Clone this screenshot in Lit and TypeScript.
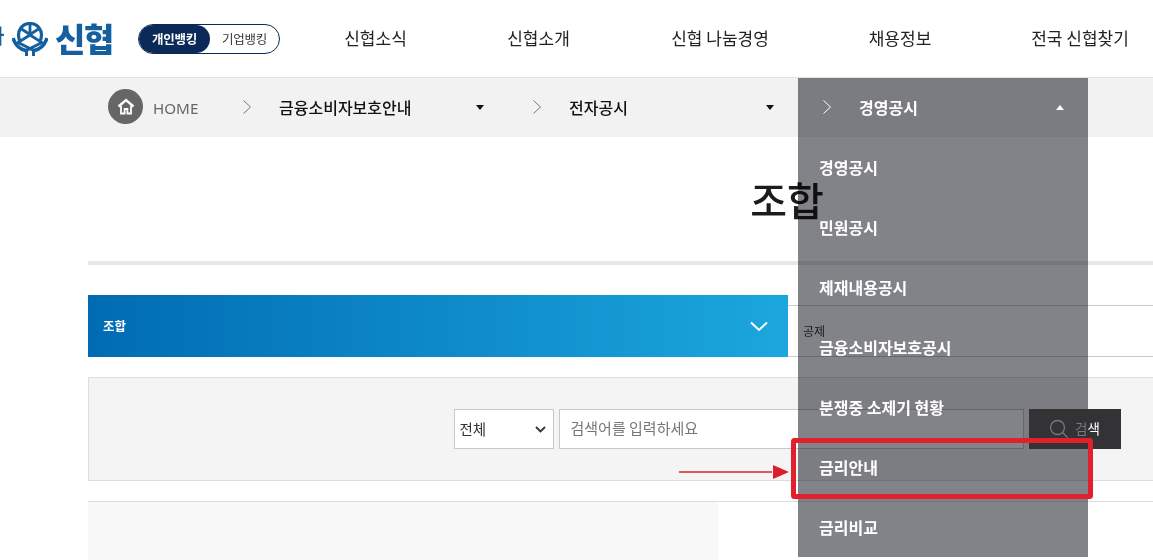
import { LitElement, html, css, svg } from "lit";
import { customElement } from "lit/decorators.js";

const chevron = html`<svg class="chev" width="8" height="14" viewBox="0 0 8 14"><path d="M0.5 0.5l7 6.5-7 6.5" fill="none" stroke="currentColor" stroke-width="1"/></svg>`;

@customElement("app-root")
export class AppRoot extends LitElement {
  static styles = css`
    :host {
      display: block;
      position: relative;
      width: 1153px;
      height: 560px;
      overflow: hidden;
      background: #fff;
      font-family: "Noto Sans CJK KR", "Noto Sans", sans-serif;
      color: #222;
    }
    .header {
      display: flex;
      align-items: center;
      height: 77px;
      border-bottom: 1px solid #e3e3e3;
    }
    .logo {
      display: flex;
      align-items: center;
      width: 138px;
      flex: none;
      color: #14609f;
    }
    .cut {
      font-size: 20px;
      font-weight: 700;
      width: 20px;
      margin-left: -14px;
      margin-right: 6px;
      margin-top: -5px;
      line-height: 1;
      flex: none;
    }
    .emblem { flex: none; margin-right: 7px; }
    .logo b {
      font-size: 33px;
      font-weight: 900;
      line-height: 1;
      letter-spacing: -1.4px;
      white-space: nowrap;
    }
    .toggle {
      display: flex;
      width: 142px;
      height: 30px;
      box-sizing: border-box;
      border: 1px solid #0b2a57;
      border-radius: 15px;
      font-size: 12.5px;
      letter-spacing: -0.3px;
      flex: none;
      overflow: hidden;
    }
    .toggle span {
      display: flex;
      align-items: center;
      justify-content: center;
    }
    .toggle .on {
      width: 71px;
      background: #0b2a57;
      color: #fff;
      font-weight: 700;
      border-radius: 15px;
    }
    .toggle .off { flex: 1; color: #333; }
    .nav { display: flex; margin-left: 14px; margin-top: -3px; flex: none; }
    .nav a {
      display: block;
      text-align: center;
      font-size: 17px;
      color: #222;
      white-space: nowrap;
    }
    .crumbs {
      display: flex;
      height: 59px;
      background: #f2f2f2;
      padding-left: 88px;
    }
    .home {
      display: flex;
      align-items: center;
      width: 130px;
      flex: none;
      padding-left: 20px;
      box-sizing: border-box;
      gap: 10px;
      color: #666;
      font-size: 15.2px;
      font-family: "Noto Sans", sans-serif;
    }
    .home span { margin-top: 0; }
    .home i {
      display: flex;
      align-items: center;
      justify-content: center;
      width: 35px;
      height: 35px;
      border-radius: 50%;
      background: #666;
      margin-top: -2px;
    }
    .item {
      display: flex;
      align-items: center;
      width: 290px;
      height: 59px;
      flex: none;
      padding-left: 25px;
      box-sizing: border-box;
      position: relative;
      font-size: 16px;
      font-weight: 500;
      color: #111;
    }
    .label { margin-top: -2px; }
    .chev { color: #777; flex: none; margin-right: 28px; margin-top: -1px; }
    .tri {
      position: absolute;
      left: 258px;
      top: 27px;
      width: 0;
      height: 0;
      border-left: 4px solid transparent;
      border-right: 4px solid transparent;
      border-top: 5px solid #111;
    }
    .item.open { color: #fff; font-weight: 700; }
    .item.open .label { position: relative; z-index: 3; }
    .item.open .chev { color: #fff; position: relative; z-index: 3; }
    .item.open .tri {
      border-top: 0;
      border-bottom: 5px solid #fff;
      z-index: 3;
    }
    .panel-bg {
      position: absolute;
      left: 0;
      top: 0;
      width: 290px;
      height: 479px;
      background: #828388;
      mix-blend-mode: multiply;
      z-index: 2;
    }
    .menu {
      position: absolute;
      left: 0;
      top: 59px;
      width: 290px;
      margin: 0;
      padding: 0;
      list-style: none;
      z-index: 3;
    }
    .menu li {
      height: 60px;
      display: flex;
      align-items: center;
      padding-left: 21px;
      box-sizing: border-box;
      color: #fff;
      font-size: 16px;
      font-weight: 700;
      white-space: nowrap;
    }
    .page {
      width: 1398px;
      margin-left: 88px;
    }
    h1 {
      margin: 0;
      height: 124px;
      display: flex;
      align-items: center;
      justify-content: center;
      border-bottom: 4px solid #e8e8e8;
      font-size: 40px;
      font-weight: 500;
      color: #1c1c1c;
      line-height: 1;
      box-sizing: content-box;
    }
    .tabs {
      display: flex;
      margin-top: 30px;
      height: 62px;
    }
    .tab-on {
      display: flex;
      align-items: center;
      justify-content: space-between;
      width: 700px;
      padding: 0 20px 0 15px;
      box-sizing: border-box;
      background: linear-gradient(90deg, #006bb3, #1ba7dd);
      color: #fff;
      font-size: 12.5px;
      font-weight: 700;
    }
    .tab-on span { margin-top: -1px; }
    .tab-off {
      flex: 1;
      margin-top: 10px;
      border-top: 1px solid #ccc;
      border-bottom: 1px solid #ccc;
      font-size: 12px;
      color: #333;
      padding-left: 15px;
      display: flex;
      align-items: center;
      padding-bottom: 2px;
      box-sizing: border-box;
    }
    .search {
      display: flex;
      align-items: center;
      justify-content: center;
      gap: 5px;
      height: 104px;
      margin-top: 20px;
      box-sizing: border-box;
      background: #f4f4f4;
      border: 1px solid #ddd;
    }
    .select {
      display: flex;
      align-items: center;
      justify-content: space-between;
      width: 100px;
      height: 40px;
      box-sizing: border-box;
      background: #fff;
      border: 1px solid #c8c8c8;
      padding: 0 7px 0 5px;
      font-size: 14.5px;
      color: #333;
    }
    .select span { margin-top: -2px; }
    .input {
      display: flex;
      align-items: center;
      width: 465px;
      height: 40px;
      box-sizing: border-box;
      background: #fff;
      border: 1px solid #c8c8c8;
      padding-left: 11px;
      padding-bottom: 3px;
      font-size: 15px;
      color: #777;
    }
    .btn {
      display: flex;
      align-items: center;
      justify-content: center;
      gap: 7px;
      width: 92px;
      height: 40px;
      background: #333335;
      position: relative;
      z-index: 4;
      font-size: 13.5px;
      color: #77787c;
    }
    .btn span { margin-top: -2px; margin-left: -1px; }
    .btn em { font-style: normal; color: #fff; }
    .lower {
      display: flex;
      height: 70px;
      margin-top: 20px;
      border-top: 1px solid #ddd;
    }
    .lower div { width: 630px; background: #f8f8f8; }
    .mark { position: absolute; z-index: 5; pointer-events: none; left: 0; top: 0; }
  `;

  render() {
    const navs: [string, number][] = [
      ["신협소식", 163],
      ["신협소개", 163],
      ["신협 나눔경영", 200],
      ["채용정보", 160],
      ["전국 신협찾기", 200],
    ];
    const menu = ["경영공시", "민원공시", "제재내용공시", "금융소비자보호공시", "분쟁중 소제기 현황", "금리안내", "금리비교"];
    return html`
      <header class="header">
        <div class="logo">
          <span class="cut">나</span>
          <svg class="emblem" width="36" height="34" viewBox="0 0 36 34">
            ${svg`<g fill="none" stroke="#14609f">
              <path d="M7.5 18.500C4 8 11 1.500 18 1.500S32 8 28.500 18.500" stroke-width="3.200"/>
              <path d="M18 1.500V12.500M18 12.500L9.500 7M18 12.500L26.500 7" stroke-width="2.800"/>
              <path d="M6 20.500L18 13L30 20.500L18 26.500z" stroke-width="2.800"/>
              <path d="M1 16C3 22.500 7 27 13.500 28.500M35 16C33 22.500 29 27 22.500 28.500" stroke-width="3.600"/>
              <path d="M14.500 34V28L18 26.500L21.500 28V34" stroke-width="3"/>
            </g>`}
          </svg>
          <b>신협</b>
        </div>
        <div class="toggle"><span class="on">개인뱅킹</span><span class="off">기업뱅킹</span></div>
        <nav class="nav">
          ${navs.map(([t, w]) => html`<a style="width:${w}px">${t}</a>`)}
        </nav>
      </header>
      <div class="crumbs">
        <div class="home">
          <i>
            <svg width="18" height="17" viewBox="0 0 18 17">
              <path d="M1.500 8.500L9 2l7.500 6.500" fill="none" stroke="#fff" stroke-width="2.400"/>
              <path d="M4 8v7.500h3.600V11h2.800v4.500H14V8" fill="none" stroke="#fff" stroke-width="1.800"/>
            </svg>
          </i>
          <span>HOME</span>
        </div>
        <div class="item">${chevron}<span class="label">금융소비자보호안내</span><span class="tri"></span></div>
        <div class="item">${chevron}<span class="label">전자공시</span><span class="tri"></span></div>
        <div class="item open">
          <div class="panel-bg"></div>
          ${chevron}<span class="label">경영공시</span><span class="tri"></span>
          <ul class="menu">${menu.map((m) => html`<li>${m}</li>`)}</ul>
        </div>
      </div>
      <main class="page">
        <h1>조합</h1>
        <div class="tabs">
          <div class="tab-on">
            <span>조합</span>
            <svg width="18" height="11" viewBox="0 0 18 11"><path d="M1 1.500l8 7.500 8-7.500" fill="none" stroke="#fff" stroke-width="2"/></svg>
          </div>
          <div class="tab-off">공제</div>
        </div>
        <div class="search">
          <div class="select">
            <span>전체</span>
            <svg width="11" height="7" viewBox="0 0 11 7"><path d="M1 1l4.500 4.500L10 1" fill="none" stroke="#333" stroke-width="1.800"/></svg>
          </div>
          <div class="input">검색어를 입력하세요</div>
          <div class="btn">
            <svg width="20" height="20" viewBox="0 0 20 20"><circle cx="8.500" cy="8.500" r="7" fill="none" stroke="#77787c" stroke-width="1.300"/><path d="M13.500 13.500l5 5" stroke="#77787c" stroke-width="1.300"/></svg>
            <span>검<em>색</em></span>
          </div>
        </div>
        <div class="lower"><div></div></div>
      </main>
      <svg class="mark" width="1153" height="560" viewBox="0 0 1153 560">
        <rect x="793.500" y="440.500" width="297" height="56" rx="1" fill="none" stroke="#e0212d" stroke-width="5"/>
        <path d="M679 472h93" stroke="#d9202c" stroke-width="1.600"/>
        <path d="M773 465l16 7-16 7z" fill="#d9202c"/>
      </svg>
    `;
  }
}
